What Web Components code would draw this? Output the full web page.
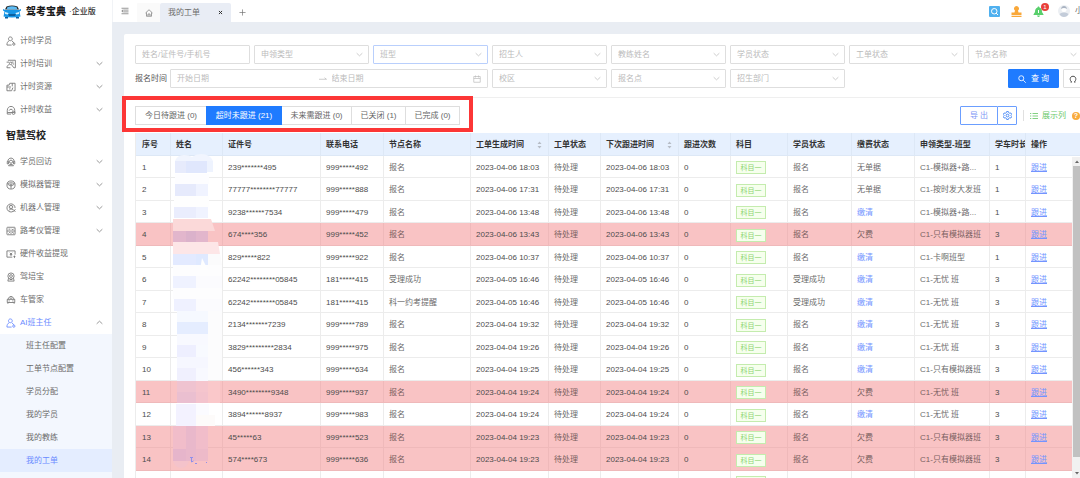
<!DOCTYPE html>
<html lang="zh-CN">
<head>
<meta charset="utf-8">
<title>驾考宝典·企业版</title>
<style>
html,body{margin:0;height:100%;overflow:hidden}
body{font:8px/12px "Liberation Sans","Noto Sans CJK SC",sans-serif;color:#6c6c6c;background:#e9edf3}
</style>
</head>
<body>
<app-shell></app-shell>
<script>
const BASE = `*{box-sizing:border-box}a{color:inherit;text-decoration:none}
button,input,select{font:inherit;color:inherit;margin:0;outline:0;border-radius:1px}
svg{display:block;flex:none;fill:none;stroke:currentColor}`;

const define = (name, render) => customElements.define(name, class extends HTMLElement {
  connectedCallback() {
    if (this.shadowRoot) return;
    const t = document.createElement('template');
    const { css, html } = render(this);
    t.innerHTML = `<style>${BASE}${css}</style>${html}`;
    this.attachShadow({ mode: 'open' }).append(t.content.cloneNode(true));
  }
});

const ICONS = {
  student: '<path d="M7 1.500c4 0 4 6 0 6s-4-6 0-6zM5 7.500C2.500 9 1.500 11 1.500 14.500H9M9.500 8c1.500.8 2.300 1.600 2.800 3"/><circle cx="12.500" cy="13" r="1.800"/>',
  train: '<path d="M3 2h12v12h-2M1 5h4M7 14H1.500c0-3 1.500-4.500 4-5"/><circle cx="7.500" cy="7" r="2"/><path d="M9 9.500l4 5M9 5h3M11 8h2"/>',
  resource: '<path d="M9 14H1.500V5H5l1-3h8.500v12H12M1.500 8H8M10 2v5M11 9l-2 5M5 11h2"/>',
  income: '<path d="M2 9c0-9 12-9 12 0v3H2zM5 9c1-3 5-3 6 0M2 12v2.500h6"/><circle cx="12" cy="12.500" r="2.500"/>',
  visit: '<path d="M3 7c0-7 10-7 10 0M2 7h2v4H2zM12 7h2v4h-2zM4 14c1-3 7-3 8 0z"/><circle cx="8" cy="7.500" r="2.500"/>',
  wheel: '<circle cx="8" cy="8" r="6.500"/><path d="M2 6c4-2 8-2 12 0M8 9v5M3 7l4 2M13 7L9 9"/><circle cx="8" cy="8" r="1.500"/>',
  robot: '<path d="M12 13a6.500 6.500 0 1 1 2.500-5"/><circle cx="8" cy="6.500" r="2.800"/><path d="M5 12c1-3 4-3 6-1M7 6.500h.5M9 6.500h.5M11 10l4 4M15 10l-3 4"/>',
  road: '<rect x="1.500" y="2" width="13" height="12" rx="1"/><path d="M1.500 8h13M4 5h3M9 5l2 1 2-2M4 12l2-2 2 2 2-2 3 2"/>',
  cash: '<path d="M10 13H1.500V3h13v6M6 6l2 2 2-2M8 8v3M6 9h4M12 12h3M13.500 10.500v4"/>',
  coach: '<circle cx="8" cy="6.500" r="5"/><circle cx="8" cy="6.500" r="2.200"/><path d="M4 10l-1 4.500h10L12 10M6 12h4"/>',
  car: '<path d="M3 7l1.500-3L8 2l3.500 2L13 7M2 7h12v5H2zM3 12v2M13 12v2M4 9.500h2M10 9.500h2M6 5h4"/>',
  down: '<path d="M1.500 5l6.500 6 6.500-6"/>',
  up: '<path d="M1.500 11L8 5l6.500 6"/>',
  fold: '<path d="M1 2.500h14M6 6.200h9M6 9.800h9M1 13.500h14M4 5.500L1.500 8 4 10.500z"/>',
  home: '<path d="M1 8l7-6.500L15 8M3 7v7.500h10V7M6 14v-4h4v4"/>',
  close: '<path d="M3 3l10 10M13 3L3 13"/>',
  plus: '<path d="M8 1v14M1 8h14"/>',
  search: '<circle cx="6.500" cy="6.500" r="5"/><path d="M10.500 10.500l5 5"/>',
  calendar: '<path d="M1.500 3h13v11.500h-13zM1.500 7h13M5 1v4M11 1v4"/>',
  arrow: '<path d="M0 8.500h15l-4-3"/>',
  reset: '<path d="M3 14h2.500C1 11 1 2.500 8 2.500S15 11 10.500 14H13"/>',
  gear: '<path d="M6.500 1h3l.6 2 1.900 1 2-.5 1.500 2.600L14 8l1.500 1.900-1.500 2.600-2-.5-1.900 1-.6 2h-3l-.6-2-1.900-1-2 .5L.5 9.900 2 8 .5 6.100 2 3.500l2 .5 1.900-1z"/><circle cx="8" cy="8" r="2.500"/>',
  list: '<path d="M5 3h11M5 8h11M5 13h11M0 3h2.500M0 8h2.500M0 13h2.500"/>'
};
const icon = (n, size = 8, w = 1.5) => `<svg viewBox="0 0 16 16" width="${size}" height="${size}" stroke-width="${w}" aria-hidden="true">${ICONS[n]}</svg>`;

define('menu-item', el => ({
  css: `:host{display:block}
    a{display:flex;align-items:center;height:23px;padding:0 9px 0 6px;gap:4px;color:#6c6c6c}
    span{flex:1}svg{color:#777}
    :host([open]) a,:host([open]) a svg:first-child{color:#6a8bff}
    :host([sub]) a{padding-left:26px}
    :host([active]) a{background:#e4edff;color:#6a8bff}`,
  html: `<a href="#">${el.getAttribute('icon') ? icon(el.getAttribute('icon'), 10, 1.4) : ''}<span><slot></slot></span>${
    el.hasAttribute('open') ? icon('up', 7, 1.7) : el.hasAttribute('more') ? icon('down', 7, 1.7) : ''}</a>`
}));

define('brand-logo', () => ({
  css: `:host{display:flex;align-items:center;height:23px;padding-left:3px;color:#1d1d1d;white-space:nowrap}
    svg{stroke:none}b{font-size:10px;font-weight:900;margin-left:5px}small{font-size:8px;font-weight:500;color:#333;margin-left:3px}`,
  html: `<svg width="18" height="14" viewBox="0 0 36 28"><path fill="#222" d="M7 3Q18-1 29 3l3 6H4z"/><path fill="#5bbcf5" d="M9 4q9-3 18 0l2 5H7z"/><path fill="#1796e6" d="M0 8l5 2h26l5-2v3l-3 2 2 10q-17 4-34 0l2-10-3-2z"/><path fill="#0c5f9e" d="M10 18h16l-2 4H12zM4 24h6v3H4zM26 24h6v3h-6z"/><path fill="#d5f1ff" d="M4 14l7 2-1 3-6-1zM32 14l-7 2 1 3 6-1z"/></svg><b>驾考宝典</b><small>·企业版</small>`
}));

define('side-bar', () => ({
  css: `:host{display:block;background:#fff;overflow:hidden}
    nav{padding-top:6px}h2{margin:0;height:29px;padding:9px 6px 8px;font-size:10px;line-height:12px;color:#222}
    .sub{background:#f3f7fe;padding-bottom:23px}`,
  html: `<brand-logo></brand-logo><nav>
    <menu-item icon="student">计时学员</menu-item><menu-item icon="train" more>计时培训</menu-item>
    <menu-item icon="resource" more>计时资源</menu-item><menu-item icon="income" more>计时收益</menu-item>
    <h2>智慧驾校</h2>
    <menu-item icon="visit" more>学员回访</menu-item><menu-item icon="wheel" more>模拟器管理</menu-item>
    <menu-item icon="robot" more>机器人管理</menu-item><menu-item icon="road" more>路考仪管理</menu-item>
    <menu-item icon="cash">硬件收益提现</menu-item><menu-item icon="coach">驾培宝</menu-item>
    <menu-item icon="car">车管家</menu-item><menu-item icon="student" open>AI班主任</menu-item>
    <div class="sub"><menu-item sub>班主任配置</menu-item><menu-item sub>工单节点配置</menu-item><menu-item sub>学员分配</menu-item>
    <menu-item sub>我的学员</menu-item><menu-item sub>我的教练</menu-item><menu-item sub active>我的工单</menu-item></div></nav>`
}));

define('top-bar', () => ({
  css: `:host{display:flex;height:22px;background:#fff;align-items:stretch;border-left:1px solid #f1f3f6;overflow:hidden;color:#6c6c6c}
    button{border:0;background:none;padding:0;display:flex;align-items:center;justify-content:center}
    .fold{width:24px}.home{width:23px;margin-top:3px;background:#fafafa}
    .tab{display:flex;align-items:center;justify-content:space-between;width:71px;margin-top:3px;padding:0 8px;background:#e9edf5;border-radius:2px 2px 0 0}
    .tab button{color:#333}.add{width:22px;padding-top:3px}
    .right{margin-left:auto;display:flex;align-items:center;gap:11px;white-space:nowrap}
    .right svg{stroke:none}.bell{position:relative}
    .bell i{position:absolute;left:8px;top:-3px;width:8px;height:8px;border-radius:4px;background:#e8403a;color:#fff;font:6px/8px "Liberation Sans",sans-serif;text-align:center}
    .user{display:flex;align-items:center;gap:5px;margin-left:3px;width:22px;overflow:hidden}`,
  html: `<button class="fold" aria-label="折叠菜单">${icon('fold', 8, 1.4)}</button>
    <button class="home" aria-label="首页">${icon('home', 8, 1.3)}</button>
    <div class="tab"><a href="#">我的工单</a><button aria-label="关闭">${icon('close', 5, 3.2)}</button></div>
    <button class="add" aria-label="新增">${icon('plus', 7, 1.5)}</button>
    <div class="right">
    <svg width="11" height="11" viewBox="0 0 22 22"><rect width="22" height="22" rx="2" fill="#4fb0ef"/><circle cx="10.500" cy="10.500" r="5.500" fill="none" stroke="#fff" stroke-width="2"/><path d="M14 14l4 4" stroke="#fff" stroke-width="2"/></svg>
    <svg width="11" height="11" viewBox="0 0 22 22"><path fill="#f9a83a" d="M11 0a5 5 0 0 1 3 9l1 4h6v5H1v-5h6l1-4a5 5 0 0 1 3-9zM1 19.500h20V22H1z"/></svg>
    <span class="bell"><svg width="11" height="11" viewBox="0 0 22 22"><path fill="#58cf6b" d="M11 1c1 0 2 1 2 2 4 1 5 5 5 9l3 5v1H1v-1l3-5c0-4 1-8 5-9 0-1 1-2 2-2zM8 19h6q-1 3-3 3t-3-3z"/><path d="M11 8v6" stroke="#fff" stroke-width="2"/></svg><i>1</i></span>
    <div class="user"><svg width="12" height="12" viewBox="0 0 24 24"><circle cx="12" cy="12" r="12" fill="#eceff3"/><circle cx="12" cy="9" r="5" fill="#fff"/><path fill="#a9b3c2" d="M6 8q1-6 6-6t6 6q-6-4-12 0z"/><path fill="#c3ccd9" d="M3 18q4-4 9-3 5-1 9 3-3 6-9 6t-9-6z"/></svg>小</div></div>`
}));

define('filter-select', el => ({
  css: `:host{display:block;position:relative}
    select{appearance:none;width:100%;height:19px;padding:0 6px;border:1px solid #dedede;background:#fff;color:#bbb}
    :host([focus]) select{border-color:#b9cffc}
    svg{position:absolute;right:6px;top:6px;color:#bbb;pointer-events:none}`,
  html: `<select aria-label="${el.getAttribute('label')}"><option>${el.getAttribute('label')}</option></select>${icon('down', 7, 1.7)}`
}));

define('date-range', () => ({
  css: `:host{display:flex;align-items:center;gap:3px;white-space:nowrap}
    .box{flex:1;display:flex;align-items:center;height:19px;padding:0 6px;border:1px solid #dedede;color:#bbb;border-radius:1px}
    input{flex:1;min-width:0;border:0;padding:0;background:none;height:17px}input::placeholder{color:#bbb}
    .box svg{margin-right:5px}.box svg:last-child{margin:0}label{color:#555}`,
  html: `<label for="from">报名时间</label><div class="box"><input id="from" placeholder="开始日期">${icon('arrow', 8, 1.5)}<input aria-label="结束日期" placeholder="结束日期">${icon('calendar', 8, 1.4)}</div>`
}));

define('filter-panel', () => ({
  css: `:host{display:grid;grid-template-columns:repeat(8,115px);gap:5px 4px;padding-bottom:9px;border-bottom:1px solid #efefef;overflow:hidden}
    .name{height:19px;border:1px solid #dedede;padding:0 6px;background:#fff}.name::placeholder{color:#bbb}
    date-range{grid-column:span 3}
    .act{grid-column:8;display:flex;gap:4px;margin-left:40px}
    .act button{flex:none;display:flex;align-items:center;justify-content:center;height:19px;padding:0 8px;gap:5px;border:1px solid #dedede;background:#fff;white-space:pre;color:#444}
    .act .go{width:51px;background:#1f7bff;border-color:#1f7bff;color:#fff}
    .act .re{padding:0 5px}`,
  html: `<input class="name" aria-label="姓名/证件号/手机号" placeholder="姓名/证件号/手机号">
    ${['申领类型', '班型', '招生人', '教练姓名', '学员状态', '工单状态', '节点名称'].map(l => `<filter-select label="${l}"${l === '班型' ? ' focus' : ''}></filter-select>`).join('')}
    <date-range></date-range>${['校区', '报名点', '招生部门'].map(l => `<filter-select label="${l}"></filter-select>`).join('')}
    <div class="act"><button class="go">${icon('search', 8, 1.7)}查 询</button><button class="re" aria-label="重置">${icon('reset', 8, 1.9)}</button></div>`
}));

define('status-tabs', () => ({
  css: `:host{display:flex;position:relative}
    button{height:19px;padding:0;border:1px solid #dedede;background:#fff;color:#666;white-space:nowrap;margin-left:-1px;border-radius:0}
    button:first-of-type{margin-left:0}
    button.on{background:#1f7bff;border-color:#1f7bff;color:#fff;position:relative}
    .w1{width:72px}.w2{width:76px}.w3{width:71px}.w4{width:55px}
    .mark{position:absolute;inset:-10px -13px -7px -13px;border:4px solid #fc3636;pointer-events:none}`,
  html: `<button class="w1">今日待跟进 (0)</button><button class="w2 on">超时未跟进 (21)</button><button class="w3">未来需跟进 (0)</button><button class="w4">已关闭 (1)</button><button class="w4">已完成 (0)</button><div class="mark"></div>`
}));

define('tool-actions', () => ({
  css: `:host{display:flex;align-items:center;height:19px;white-space:pre}
    button{display:flex;align-items:center;justify-content:center;height:19px;padding:0;border:1px solid #6b9eff;background:#fff;color:#7d97f5}
    .ex{width:38px}.set{width:20px;margin-left:-1px;color:#3f82f5}
    hr{width:1px;height:11px;border:0;margin:0 6px;background:#e0e0e0}
    a{display:flex;align-items:center;gap:4px;color:#6bc96b}
    i{width:8px;height:8px;margin-left:6px;border-radius:4px;background:#f9ab3c;color:#fff;font:bold 7px/8px "Liberation Sans",sans-serif;text-align:center}`,
  html: `<button class="ex">导 出</button><button class="set" aria-label="设置">${icon('gear', 9, 1.6)}</button><hr><a href="#">${icon('list', 8, 1.7)}展示列</a><i>?</i>`
}));

const COLS = [['序号', 35], ['姓名', 52], ['证件号', 98], ['联系电话', 63], ['节点名称', 87], ['工单生成时间', 78], ['工单状态', 52], ['下次跟进时间', 78],
  ['跟进次数', 52], ['科目', 57], ['学员状态', 64], ['缴费状态', 63], ['申领类型-班型', 75], ['学车时长', 36], ['操作', 0]];
const ROWS = [
  ['239*******495', '999*****492', '报名', '2023-04-06 18:03', '报名', '无单据', 'C1-模拟器+路...', 1],
  ['77777********77777', '999*****888', '报名', '2023-04-06 17:31', '报名', '无单据', 'C1-按时发大发班', 1],
  ['9238******7534', '999*****479', '报名', '2023-04-06 13:48', '报名', '缴清', 'C1-模拟器+路...', 1],
  ['674****356', '999*****452', '报名', '2023-04-06 13:43', '报名', '欠费', 'C1-只有模拟器班', 3],
  ['829*****822', '999*****922', '报名', '2023-04-06 10:37', '报名', '缴清', 'C1-卡啊班型', 1],
  ['62242********05845', '181*****415', '受理成功', '2023-04-05 16:46', '受理成功', '缴清', 'C1-无忧 班', 3],
  ['62242********05845', '181*****415', '科一约考提醒', '2023-04-05 16:46', '受理成功', '缴清', 'C1-无忧 班', 3],
  ['2134*******7239', '999*****789', '报名', '2023-04-04 19:32', '报名', '缴清', 'C1-无忧 班', 3],
  ['3829*********2834', '999*****975', '报名', '2023-04-04 19:26', '报名', '缴清', 'C1-无忧 班', 3],
  ['456******343', '999*****634', '报名', '2023-04-04 19:25', '报名', '缴清', 'C1-只有模拟器班', 3],
  ['3490********9348', '999*****937', '报名', '2023-04-04 19:24', '报名', '欠费', 'C1-无忧 班', 3],
  ['3894******8937', '999*****983', '报名', '2023-04-04 19:24', '报名', '缴清', 'C1-无忧 班', 3],
  ['45*****63', '999*****523', '报名', '2023-04-04 19:23', '报名', '欠费', 'C1-只有模拟器班', 3],
  ['574****673', '999*****636', '报名', '2023-04-04 19:23', '报名', '欠费', 'C1-只有模拟器班', 3]
];
const TAG = '<span class="tag">科目一</span>';
const rowHtml = (r, i) => `<tr${r[5] === '欠费' ? ' class="due"' : ''}>${[i + 1, '', r[0], r[1], r[2], r[3], '待处理', r[3], 0, TAG, r[4],
  r[5] === '缴清' ? '<a href="#">缴清</a>' : r[5], r[6], r[7], '<a href="#" class="u">跟进</a>'].map(c => `<td${/^[\d*:\- ]+$/.test(c) ? ' class="n"' : ''}>${c}</td>`).join('')}</tr>`;
/* the row cut off by the bottom edge shows only the top of its subject tag */
const LAST = `<tr>${COLS.map((c, i) => `<td>${i === 9 ? '<span class="tag"></span>' : ''}</td>`).join('')}</tr>`;

/* pixelated cover over the names: [x, y, width, height, colour] */
const MASK = [[175,161,32,12,'#e7ebfc'],[186,161,21,12,'#e0e7fd'],[207,161,6,11,'#eef3fe'],[175,174,34,10,'#fdfdff'],[175,184,21,12,'#e6eafc'],[196,184,12,12,'#f0f3ff'],
  [174,196,35,11,'#fefefe'],[174,207,22,11,'#eaedfd'],[196,207,12,11,'#f0f3ff'],[173,231,35,11,'#e2b6cc'],[186,231,10,11,'#dbb2cb'],
  [173,254,23,11,'#e3eaff'],[196,254,12,11,'#dfe9ff'],[173,265,49,11,'#fdfdfe'],[173,276,23,12,'#eff2ff'],[196,276,26,12,'#fbfbfe'],[173,288,49,11,'#fdfdfe'],
  [174,299,22,12,'#eff1ff'],[196,299,26,12,'#fbfbfe'],[177,311,31,11,'#f6f9ff'],[208,311,14,69,'#fcfcfd'],[177,322,31,12,'#e5edff'],[177,334,31,11,'#f8f9ff'],
  [177,345,19,12,'#eeefff'],[196,345,12,12,'#f8faff'],[177,357,31,11,'#f6f7ff'],[177,368,19,13,'#f0f0fe'],[196,368,12,13,'#f8f9ff'],
  [177,381,19,11,'#efc3d0'],[196,381,12,11,'#f5c5cd'],[208,381,12,22,'#fac8ca'],[177,392,19,11,'#eabfd0'],[196,392,12,11,'#f3c3cd'],
  [176,404,20,22,'#f3f2ff'],[196,404,13,12,'#fbfbff'],[196,415,19,11,'#fdfbfa'],[173,426,35,23,'#f1bdca'],[186,426,10,35,'#e9b8cb'],[173,449,13,12,'#e6b5cb'],[196,449,12,12,'#edbac9']];

define('order-table', () => ({
  css: `:host{display:block;position:relative;flex:1;min-height:0;overflow:hidden}
    table{width:100%;table-layout:fixed;border-collapse:separate;border-spacing:0;border-left:1px solid #ececec}
    th,td{padding:2px 0 0 5px;text-align:left;white-space:nowrap;overflow:hidden;border-right:1px solid #ececec;border-bottom:1px solid #ececec}
    th:first-child,td:first-child{padding-left:6px}
    th{height:23px;background:#e6f0fe;color:#333;font-weight:700;border-color:#dde8f6}
    th:last-child,td:last-child{border-right:0}
    td{height:22px;color:#6c6c6c}.n{color:#4c4c4c}tr:nth-child(even) td{height:23px}
    .due td{background:#f9c3c4;border-color:#efb9ba}.due td:not(.n){color:#7a5f60}
    td a{color:#7394ff}.u{text-decoration:underline}
    .tag{display:block;width:30px;height:13px;border:1px solid #c4ecae;background:#f6ffed;color:#8cd470;font-size:7px;line-height:11px;text-align:center}
    .sort{display:flex;justify-content:space-between;align-items:center;padding-right:6px}.sort svg{fill:#b6bcc6;stroke:none}
    .mask{position:absolute;left:36px;top:20px;stroke:none}
    .bar{position:absolute;right:0;top:24px;bottom:0;width:8px;display:flex;flex-direction:column;align-items:center;padding:3px 0 3px 1px;background:#f1f1f1}
    .bar i{flex:1;width:7px;margin:3px 0 15px;background:#c1c1c1}.bar svg{stroke:none;fill:#666}`,
  html: `<table><colgroup>${COLS.map(c => `<col${c[1] ? ` style="width:${c[1]}px"` : ''}>`).join('')}</colgroup><thead><tr>${
    COLS.map(c => `<th>${c[0].endsWith('时间') ? `<span class="sort">${c[0]}<svg width="5" height="8" viewBox="0 0 10 16"><path d="M5 1l4 5H1zM5 15l4-5H1z"/></svg></span>` : c[0]}</th>`).join('')
    }</tr></thead><tbody>${ROWS.map(rowHtml).join('')}${LAST}</tbody></table>
    <svg class="mask" width="54" height="318" viewBox="171 153 54 318" aria-hidden="true">
    <path fill="#f1f5fe" d="M175 161q2-6 9-6 5 0 8 2 4-3 9-3 9 0 12 7z"/>
    <g shape-rendering="crispEdges">${MASK.map(m => `<rect x="${m[0]}" y="${m[1]}" width="${m[2]}" height="${m[3]}" fill="${m[4]}"/>`).join('')}</g>
    <path fill="#fbd9d9" d="M173 219h38l4 12h-42z"/><path fill="#fde6e7" d="M173 242h45l2 12h-47z"/><path fill="#fbfbfc" d="M208 254h12l2 11h-14z"/><path fill="#fefefe" d="M202 258l6 12h-8z"/>
    <path fill="#f4c3cb" d="M173 461h16q-2 7-8 7t-8-7z"/><path d="M190 457.500h3M191.500 457v5l2-1M195 463.500h2M206 462.500h1" stroke="#8f8fea" fill="none"/></svg>
    <div class="bar"><svg width="4" height="3" viewBox="0 0 8 6"><path d="M4 1l4 5H0z"/></svg><i></i><svg width="4" height="3" viewBox="0 0 8 6"><path d="M4 5l4-5H0z"/></svg></div>`
}));

define('app-shell', () => ({
  css: `:host{display:grid;grid-template-columns:112px minmax(0,1fr);height:100vh}
    .main{display:flex;flex-direction:column;min-height:0}
    main{flex:1;min-height:0;padding:12px 0 0 12px;display:flex;overflow:hidden}
    .card{flex:1;min-width:0;background:#fff;border-radius:2px 0 0 0;padding:11px 0 0 11px;display:flex;flex-direction:column}
    .tools{display:flex;margin:8px 0}tool-actions{margin-left:auto}filter-panel{flex:none}`,
  html: `<side-bar></side-bar><div class="main"><top-bar></top-bar><main><div class="card">
    <filter-panel></filter-panel><div class="tools"><status-tabs></status-tabs><tool-actions></tool-actions></div><order-table></order-table>
    </div></main></div>`
}));
</script>
</body>
</html>
